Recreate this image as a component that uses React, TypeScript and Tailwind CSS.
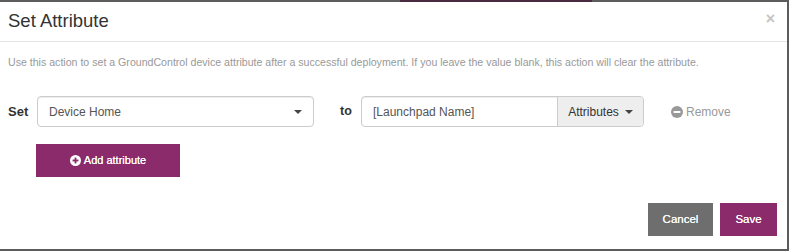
const FONT = "font-['Liberation_Sans',Arial,sans-serif]";

function Caret() {
  return (
    <span className="inline-block h-0 w-0 border-x-[4px] border-t-[4px] border-x-transparent border-t-[#444]" />
  );
}

function PlusCircle() {
  return (
    <svg width="11" height="11" viewBox="0 0 12 12" className="shrink-0">
      <circle cx="6" cy="6" r="6" fill="#fff" />
      <rect x="2.8" y="5" width="6.4" height="2" fill="#8c2b6c" />
      <rect x="5" y="2.8" width="2" height="6.4" fill="#8c2b6c" />
    </svg>
  );
}

function MinusCircle() {
  return (
    <svg width="12" height="12" viewBox="0 0 12 12" className="shrink-0">
      <circle cx="6" cy="6" r="6" fill="#999" />
      <rect x="2.6" y="5" width="6.8" height="2" fill="#fff" />
    </svg>
  );
}

export default function App() {
  return (
    <div className={`${FONT} h-[251px] w-[789px] overflow-hidden bg-[#5c5c5c] pr-[2px] pb-[2px]`}>
      <div className="flex h-[2px] w-full">
        <div className="w-[400px]" />
        <div className="w-[192px] bg-[#4a2a40]" />
      </div>
      <div className="flex h-[247px] flex-col bg-white">
        {/* header */}
        <div className="flex h-[40px] items-center justify-between border-b border-[#e5e5e5] pl-2 pr-[12px]">
          <h4 className="text-[18.5px] leading-none text-[#333]">Set Attribute</h4>
          <span className="-mt-[6px] text-[16px] font-bold leading-none text-[#c4c4c4]">×</span>
        </div>

        {/* body */}
        <div className="flex flex-col px-2 pt-[12px]">
          <p className="text-[10.6px] leading-[16px] text-[#999]">
            Use this action to set a GroundControl device attribute after a successful deployment. If you leave the value blank, this action will clear the attribute.
          </p>

          <div className="mt-[26px] flex items-center">
            <span className="w-[29px] text-[13px] font-bold text-[#333]">Set</span>
            <div className="flex h-[31px] w-[277px] items-center justify-between rounded-[4px] border border-[#ccc] bg-white pl-[11px] pr-[11px] shadow-[inset_0_1px_1px_rgba(0,0,0,0.075)]">
              <span className="text-[12px] text-[#555]">Device Home</span>
              <Caret />
            </div>
            <span className="ml-[26px] w-[21px] text-[12.5px] font-bold text-[#333]">to</span>
            <div className="flex h-[31px] w-[283px] rounded-[4px] border border-[#ccc] shadow-[inset_0_1px_1px_rgba(0,0,0,0.075)]">
              <div className="flex w-[196px] items-center border-r border-[#ccc] px-[11px]">
                <span className="text-[12px] text-[#555]">[Launchpad Name]</span>
              </div>
              <div className="flex flex-1 items-center justify-center gap-[6px] rounded-r-[4px] bg-[#eee]">
                <span className="text-[12px] text-[#333]">Attributes</span>
                <Caret />
              </div>
            </div>
            <div className="ml-[27px] flex items-center gap-[3px]">
              <MinusCircle />
              <span className="text-[12px] text-[#999]">Remove</span>
            </div>
          </div>

          <div className="mt-[17px] pl-[28px]">
            <button className="flex h-[33px] w-[144px] items-center justify-center gap-[3px] bg-[#8c2b6c] text-[11px] text-white [text-shadow:0_0_0.4px_#fff]">
              <PlusCircle />
              <span>Add attribute</span>
            </button>
          </div>
        </div>

        {/* footer */}
        <div className="mt-[26px] flex justify-end gap-[7px] pr-[10px]">
          <button className="h-[33px] w-[65px] bg-[#6e6e6e] text-[11.5px] text-white [text-shadow:0_0_0.4px_#fff]">Cancel</button>
          <button className="h-[33px] w-[57px] bg-[#8c2b6c] text-[11.5px] text-white [text-shadow:0_0_0.4px_#fff]">Save</button>
        </div>
      </div>
    </div>
  );
}
